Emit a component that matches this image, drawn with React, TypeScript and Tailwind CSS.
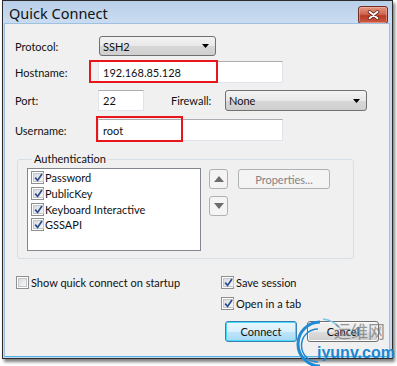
import React from "react";

function Check({ checked }: { checked: boolean }) {
  return (
    <span className="w-[13px] h-[13px] shrink-0 border border-[#8e8f8f] bg-white p-[1px] flex">
      <span className="flex-1 flex items-center justify-center border border-[#c4c6c9] bg-[linear-gradient(135deg,#d9dbde,#f7f7f7)]">
        {checked && (
          <svg width="9" height="9" viewBox="0 0 9 9">
            <path d="M1.2 4.6 L3.6 7.4 L8 1" stroke="#2b4c91" strokeWidth="1.7" fill="none" />
          </svg>
        )}
      </span>
    </span>
  );
}

function Select({ value, w }: { value: string; w: string }) {
  return (
    <div
      className={`${w} h-full border border-[#707070] rounded-[3px] bg-[linear-gradient(#f3f3f3,#e8e8e8_50%,#d7d7d7_51%,#cfcfcf)] flex items-center pl-[3px] pr-[6px] justify-between`}
    >
      <span>{value}</span>
      <svg width="7" height="4" viewBox="0 0 7 4">
        <path d="M0 0 H7 L3.5 4 Z" fill="#000" />
      </svg>
    </div>
  );
}

function Input({ value, w }: { value: string; w: string }) {
  return (
    <div className={`${w} h-full bg-white border border-[#e2e3ea] border-t-[#abadb3] flex items-center pl-[4px]`}>
      {value}
    </div>
  );
}

function Btn({ label, def = false }: { label: string; def?: boolean }) {
  return (
    <div
      className={`w-[72px] h-[21px] rounded-[3px] flex items-center justify-center border ${
        def
          ? "border-[#3c7fb1] shadow-[inset_0_0_0_1px_#48d8f9] bg-[linear-gradient(#eaf6fd,#d9f0fc_50%,#bee6fd_51%,#a7d9f5)]"
          : "border-[#707070] shadow-[inset_0_0_0_1px_#fcfcfc] bg-[linear-gradient(#f2f2f2,#ebebeb_50%,#dddddd_51%,#cfcfcf)]"
      }`}
    >
      {label}
    </div>
  );
}

function Arrow({ up }: { up: boolean }) {
  return (
    <div className="w-[19px] h-[20px] rounded-[3px] border border-[#adb2b5] bg-[#f4f4f4] flex items-center justify-center">
      <svg width="10" height="6" viewBox="0 0 10 6">
        {up ? <path d="M0 6 H10 L5 0 Z" fill="#6d6d6d" /> : <path d="M0 0 H10 L5 6 Z" fill="#6d6d6d" />}
      </svg>
    </div>
  );
}

export default function App() {
  return (
    <div className="w-[397px] h-[366px] bg-white relative overflow-hidden font-['Lato',sans-serif] text-[11px] leading-none text-[#111]">
      <div className="ml-[2px] w-[391px] h-[359px] border border-[#2b2b2b] bg-[#c4d9ef] flex flex-col shadow-[2px_3px_3px_rgba(0,0,0,0.5)]">
        {/* title bar */}
        <div className="h-[22px] flex items-end justify-between pl-[6px] pr-[4px] bg-[linear-gradient(#b9cfe9,#cadcf1)]">
          <span className="text-[14.5px] self-center pt-[3px] font-['Noto_Sans',sans-serif]">Quick Connect</span>
          <div className="w-[30px] h-[18px] -mb-[1px] rounded-[3px] border border-[#6b2f28] bg-[#c8503b] bg-[linear-gradient(#e39682,#cf6651_45%,#b93a25_55%,#cc5a42)] flex items-center justify-center shadow-[inset_0_0_0_1px_rgba(255,200,190,0.45)]">
            <svg width="13" height="10" viewBox="0 0 13 10">
              <path d="M2.5 1.8 L10.5 8.2 M10.5 1.8 L2.5 8.2" stroke="#5e2620" strokeWidth="3.4" strokeLinecap="round" />
              <path d="M2.5 1.8 L10.5 8.2 M10.5 1.8 L2.5 8.2" stroke="#fff" strokeWidth="1.8" strokeLinecap="round" />
            </svg>
          </div>
        </div>
        {/* client area */}
        <div className="flex-1 ml-[1px] mr-[2px] mb-[1px] bg-[#f0f0f0] border border-[#9fc0de] border-b-[#4fb3e4] flex flex-col pl-[10px]">
          <div className="mt-[12px] h-[20px] flex items-center">
            <span className="w-[84px]">Protocol:</span>
            <Select value="SSH2" w="w-[117px]" />
          </div>
          <div className="mt-[5px] h-[22px] flex items-center relative">
            <span className="w-[83px]">Hostname:</span>
            <Input value="192.168.85.128" w="w-[185px]" />
            <div className="absolute left-[74px] top-[-1px] w-[129px] h-[23px] border-2 border-[#e8161b]" />
          </div>
          <div className="mt-[7px] h-[21px] flex items-center">
            <span className="w-[83px]">Port:</span>
            <Input value="22" w="w-[46px]" />
            <span className="ml-[27px] w-[54px]">Firewall:</span>
            <div className="h-[21px]">
              <Select value="None" w="w-[142px]" />
            </div>
          </div>
          <div className="mt-[8px] h-[22px] flex items-center relative">
            <span className="w-[83px]">Username:</span>
            <Input value="root" w="w-[185px]" />
            <div className="absolute left-[81px] top-[-3px] w-[87px] h-[26px] border-2 border-[#e8161b]" />
          </div>
          <fieldset className="mt-[11px] ml-[2px] w-[337px] h-[107px] border border-[#d5dfe5] rounded-[3px] flex pl-[9px]">
            <legend className="ml-[5px] px-[2px] leading-[14px]">Authentication</legend>
            <div className="flex items-start mt-[2px]">
              <div className="w-[174px] h-[83px] bg-white border border-[#828790] pt-[1px] pl-[3px] flex flex-col">
                {["Password", "PublicKey", "Keyboard Interactive", "GSSAPI"].map((t) => (
                  <div key={t} className="h-[15.7px] flex items-center gap-[1px]">
                    <Check checked />
                    <span>{t}</span>
                  </div>
                ))}
              </div>
              <div className="ml-[8px] mt-[1px] flex flex-col gap-[7px]">
                <Arrow up />
                <Arrow up={false} />
              </div>
              <div className="ml-[10px] mt-[1px] w-[92px] h-[20px] rounded-[3px] border border-[#adb2b5] bg-[#f4f4f4] text-[#838383] flex items-center justify-center">
                Properties...
              </div>
            </div>
          </fieldset>
          <div className="mt-[17px] flex">
            <div className="w-[206px] h-[13px] flex items-center gap-[2px] pl-[1px]">
              <Check checked={false} />
              <span>Show quick connect on startup</span>
            </div>
            <div className="flex flex-col gap-[8px]">
              <div className="h-[13px] flex items-center gap-[2px]">
                <Check checked />
                <span>Save session</span>
              </div>
              <div className="h-[13px] flex items-center gap-[2px]">
                <Check checked />
                <span>Open in a tab</span>
              </div>
            </div>
          </div>
          <div className="mt-[11px] flex gap-[10px] pl-[210px]">
            <Btn label="Connect" def />
            <Btn label="Cancel" />
          </div>
        </div>
      </div>
      {/* watermark */}
      <svg className="absolute left-[290px] top-[316px]" width="60" height="50" viewBox="0 0 60 50">
        <path d="M30 6 A22 22 0 1 0 30 50" stroke="#1e8ad6" strokeWidth="3" fill="none" />
        <path d="M28 13 A15 15 0 1 0 28 46" stroke="#1e8ad6" strokeWidth="1.5" fill="none" />
        <path d="M33 3 A27 27 0 0 1 50 12" stroke="#7cc4ef" strokeWidth="1.5" fill="none" />
      </svg>
      <span className="absolute left-[334px] top-[322px] text-[17px] leading-none text-[#7f7f7f] opacity-80 font-['Noto_Sans_CJK_SC',sans-serif]">运维网</span>
      <span className="absolute left-[317px] top-[345px] text-[16px] leading-none font-bold text-[#1c86d1] font-['Liberation_Sans',sans-serif]">iyunv.com</span>
    </div>
  );
}
